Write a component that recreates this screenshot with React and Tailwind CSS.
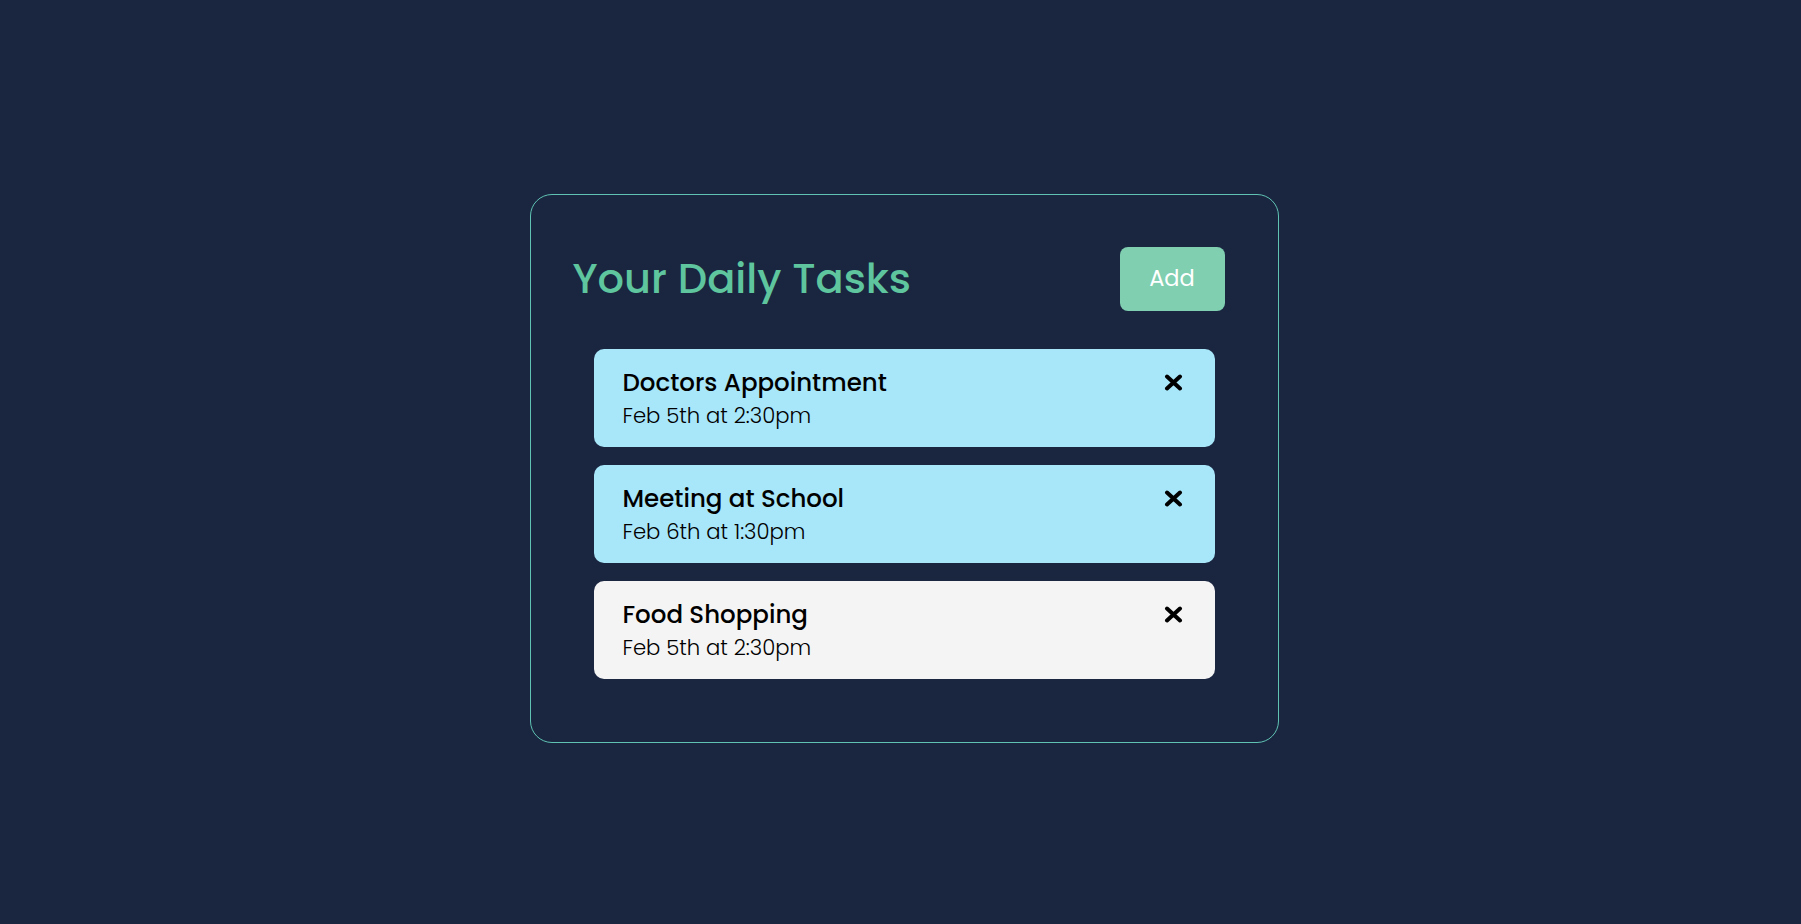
import React from "react";

const TASKS = [
  { id: 1, text: "Doctors Appointment", day: "Feb 5th at 2:30pm", reminder: true },
  { id: 2, text: "Meeting at School", day: "Feb 6th at 1:30pm", reminder: true },
  { id: 3, text: "Food Shopping", day: "Feb 5th at 2:30pm", reminder: false },
];

function CloseIcon() {
  return (
    <svg width="19" height="17" viewBox="0 0 19 17" fill="none">
      <path
        d="M3 2.5 L16 14.5 M16 2.5 L3 14.5"
        stroke="#000"
        strokeWidth="4"
        strokeLinecap="round"
      />
    </svg>
  );
}

function Task({ task }) {
  return (
    <div
      className={`flex h-[98px] items-start justify-between rounded-[10px] pl-[29px] pr-[32px] pt-[18px] ${
        task.reminder ? "bg-[#a8e6fa]" : "bg-[#f4f4f4]"
      }`}
    >
      <div className="flex flex-col">
        <h3 className="text-[24.5px] font-medium leading-[32px] text-black">{task.text}</h3>
        <p className="mt-[3px] text-[21.2px] font-light leading-[28px] text-black">{task.day}</p>
      </div>
      <button className="mt-[7px] cursor-pointer" aria-label="Delete task">
        <CloseIcon />
      </button>
    </div>
  );
}

export default function App() {
  return (
    <div
      className="flex min-h-screen w-full justify-center bg-[#1a2540] pl-[7px] pt-[194px]"
      style={{ fontFamily: "Poppins, Inter, 'Noto Sans', sans-serif" }}
    >
      <div className="h-fit w-[749px] rounded-[22px] border border-[#5fc3b3] pb-[63px] pt-[52px]">
        {/* Header */}
        <header className="flex items-center justify-between pl-[42px] pr-[53px]">
          <h1 className="text-[41.5px] font-medium leading-none text-[#5ec59e]">Your Daily Tasks</h1>
          <button className="h-[64px] w-[105px] cursor-pointer rounded-[8px] bg-[#7fcfb0] text-[22.5px] text-white">
            Add
          </button>
        </header>

        {/* Tasks */}
        <div className="mt-[38px] flex flex-col gap-[18px] px-[63px]">
          {TASKS.map((task) => (
            <Task key={task.id} task={task} />
          ))}
        </div>
      </div>
    </div>
  );
}
